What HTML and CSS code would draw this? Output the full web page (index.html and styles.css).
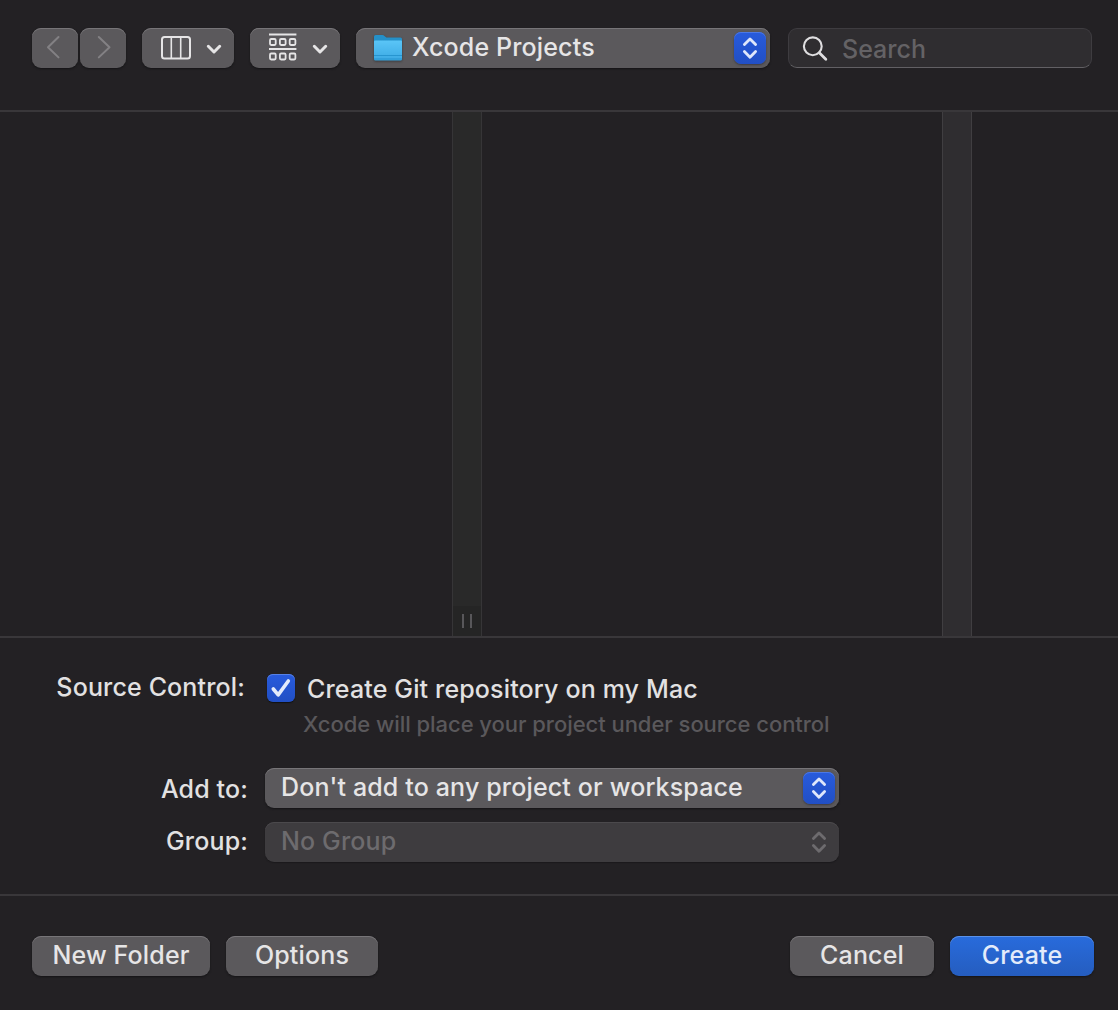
FILE: index.html
```html
<!DOCTYPE html>
<html lang="en">
<head>
<meta charset="utf-8">
<title>Xcode Projects</title>
<link rel="stylesheet" href="styles.css">
</head>
<body>
<svg class="defs" width="0" height="0" aria-hidden="true">
  <symbol id="updown" viewBox="0 0 32 32"><path d="M10.4 12.6 16 6.9l5.6 5.7M10.4 19.6 16 25.3l5.6-5.7" fill="none" stroke="currentColor" stroke-width="2.8" stroke-linecap="round" stroke-linejoin="round"/></symbol>
  <symbol id="down" viewBox="0 0 16 12"><path d="M2.3 3.3 8 9l5.7-5.7" fill="none" stroke="currentColor" stroke-width="3" stroke-linecap="round" stroke-linejoin="round"/></symbol>
</svg>
<main class="dialog">
  <header class="toolbar">
    <div class="nav">
      <button class="control nav-button" aria-label="Back"><svg width="46" height="40" viewBox="0 0 46 40"><path d="M26.5 9 16 19.2l10.5 10.200" fill="none" stroke="currentColor" stroke-width="2" stroke-linecap="round" stroke-linejoin="round"/></svg></button>
      <button class="control nav-button" aria-label="Forward"><svg width="46" height="40" viewBox="0 0 46 40"><path d="M18.8 9l10.7 10.200-10.700 10.200" fill="none" stroke="currentColor" stroke-width="2" stroke-linecap="round" stroke-linejoin="round"/></svg></button>
    </div>
    <button class="control view-button" aria-label="Columns">
      <svg width="30" height="24" viewBox="0 0 30 24"><path d="M10.3 1v22M19.7 1v22" stroke="currentColor" stroke-width="1.6"/><rect x="1" y="1" width="28" height="21.5" rx="2.5" fill="none" stroke="currentColor" stroke-width="2"/></svg>
      <svg class="caret" width="16" height="12"><use href="#down"/></svg>
    </button>
    <button class="control group-button" aria-label="Group by">
      <svg width="28" height="28" viewBox="0 0 28 28"><path d="M0 1.5h27.400M0 16h27.400" stroke="currentColor" stroke-width="2"/><g fill="none" stroke="currentColor" stroke-width="1.8"><rect x="1" y="6" width="5.700" height="6" rx="1.2"/><rect x="10.900" y="6" width="5.700" height="6" rx="1.2"/><rect x="20.700" y="6" width="5.700" height="6" rx="1.2"/><rect x="1" y="20.5" width="5.700" height="6" rx="1.2"/><rect x="10.900" y="20.5" width="5.700" height="6" rx="1.2"/><rect x="20.700" y="20.5" width="5.700" height="6" rx="1.2"/></g></svg>
      <svg class="caret" width="16" height="12"><use href="#down"/></svg>
    </button>
    <button class="control popup location">
      <svg class="folder" width="30" height="30" viewBox="0 0 30 30"><defs><linearGradient id="face" x1="0" y1="0" x2="0" y2="1"><stop offset="0" stop-color="#5ac5f7"/><stop offset="1" stop-color="#3ba9e3"/></linearGradient></defs><path d="M1 3.5Q1 2 2.5 2h7q1 0 2 .9L13.4 4.4H27.5Q29 4.4 29 6v20H1z" fill="#2590c8"/><path d="M1 8.3Q1 7.6 2 7.6h26q1 0 1 .7V26q0 1.6-1.6 1.6H2.6Q1 27.600 1 26z" fill="url(#face)"/><path d="M1 22.500h28M1 26h28" stroke="#2795d0"/></svg>
      <span class="label">Xcode Projects</span>
      <span class="stepper"><svg width="32" height="32"><use href="#updown"/></svg></span>
    </button>
    <label class="search">
      <svg width="28" height="28" viewBox="0 0 28 28"><circle cx="11.800" cy="12.300" r="8.900" fill="none" stroke="currentColor" stroke-width="2.100"/><path d="m18.300 18.800 6.500 6.400" stroke="currentColor" stroke-width="2.800" stroke-linecap="round"/></svg>
      <span>Search</span>
    </label>
  </header>
  <section class="browser">
    <div class="column"></div>
    <div class="scroller first"><span class="grip"></span></div>
    <div class="column"></div>
    <div class="scroller second"></div>
    <div class="column"></div>
  </section>
  <section class="form">
    <span class="row-label source">Source Control:</span>
    <div class="field git">
      <span class="checkbox"><svg width="28" height="28" viewBox="0 0 28 28"><path d="m6.300 15 4.900 5.900L21.300 7" fill="none" stroke="#e3ebfb" stroke-width="3.600" stroke-linecap="round" stroke-linejoin="round"/></svg></span>
      <span>Create Git repository on my Mac</span>
    </div>
    <p class="hint">Xcode will place your project under source control</p>
    <span class="row-label add">Add to:</span>
    <button class="control popup project"><span class="label">Don't add to any project or workspace</span><span class="stepper"><svg width="32" height="32"><use href="#updown"/></svg></span></button>
    <span class="row-label group">Group:</span>
    <button class="control popup disabled" disabled><span class="label">No Group</span><span class="stepper"><svg width="32" height="32"><use href="#updown"/></svg></span></button>
  </section>
  <footer class="footer">
    <button class="control new-folder">New Folder</button>
    <button class="control options">Options</button>
    <button class="control cancel">Cancel</button>
    <button class="control create">Create</button>
  </footer>
</main>
</body>
</html>
```

FILE: styles.css
```css
* { box-sizing: border-box; }
body { margin: 0; background: #232124; color: #e2e1e2; font: 500 25px/38px Inter, "Liberation Sans", sans-serif; letter-spacing: .15px; white-space: nowrap; }
svg { display: block; flex: none; }
.defs { position: absolute; }
.dialog { width: 1118px; height: 1010px; display: grid; grid-template-rows: 112px 524px 260px 114px; }

.control { display: flex; align-items: center; height: 40px; padding: 0 0 2px; border: 0; border-radius: 9px; background: #5b595c; color: #e6e5e6; font: inherit; letter-spacing: inherit; box-shadow: inset 0 1px #777578, 0 1px 2px #151416; }

.toolbar { display: flex; align-items: flex-start; padding: 28px 26px 0 32px; border-bottom: 2px solid #39373a; }
.nav { display: flex; gap: 2px; margin-right: 16px; }
.nav-button { width: 46px; padding: 0; color: #838184; }
.view-button { width: 92px; margin-right: 16px; padding: 0 12px 1px 19px; justify-content: space-between; }
.group-button { width: 90px; margin-right: 16px; padding: 0 12px 3px 19px; justify-content: space-between; }
.caret { margin-top: 2px; }
.group-button .caret { margin-top: 4px; }
.popup { padding-left: 16px; padding-right: 4px; }
.popup .label { flex: 1; text-align: left; }
.location { width: 414px; margin-right: 18px; padding-left: 17px; }
.folder { margin: 2px 9px 0 0; filter: drop-shadow(0 1px 1px #3a393b); }
.stepper { width: 32px; height: 32px; margin-top: 2px; border-radius: 7px; color: #dfe7fb; background: linear-gradient(#285bdc, #214fc4); box-shadow: inset 0 1px #4b78e5, 0 1px 2px #3d3b40; }
.search { display: flex; align-items: center; width: 304px; height: 40px; padding-left: 12px; border: 1px solid #3e3c40; border-bottom-color: #626064; border-radius: 9px; background: #2f2d30; color: #dfdee0; }
.search span { margin: 2px 0 0 13px; color: #646265; letter-spacing: 0; }

.browser { display: grid; grid-template-columns: 452px 30px 460px 30px 1fr; }
.scroller { border: solid #363537; border-width: 0 1px; background: #2f2d30; }
.scroller.first { display: flex; align-items: flex-end; background: linear-gradient(#292929 494px, #252525 494px); }
.scroller.second { border-color: #403e41; }
.grip { width: 10px; height: 14px; margin: 0 0 8px 9px; border: solid #58575a; border-width: 0 2px; }

.form { display: grid; grid-template-columns: 248px 574px; grid-template-rows: 38px 40px 40px 40px; column-gap: 17px; align-content: start; padding-top: 32px; border-top: 2px solid #39373a; border-bottom: 2px solid #39373a; }
.row-label { text-align: right; }
.source { padding-right: 3px; margin-top: -2px; }
.git { display: flex; align-items: flex-start; }
.checkbox { width: 28px; height: 28px; margin: 4px 12px 0 2px; border-radius: 6px; background: linear-gradient(#285bdc, #214fc4); box-shadow: inset 0 1px #5781e4, 0 1px 1px #111; }
.hint { grid-column: 2; margin: 0 0 0 38px; font-size: 22px; line-height: 32px; letter-spacing: -.04px; color: #5a585b; }
.add { margin-top: 22px; }
.project { width: 574px; margin-top: 20px; }
.group { margin-top: 34px; }
.disabled { width: 574px; margin-top: 34px; background: #3e3c3f; color: #6d6b6e; box-shadow: inset 0 1px #4b494c, 0 1px 1px #1b191c; }
.disabled .stepper { background: none; box-shadow: none; color: #6d6b6e; }

.footer { display: flex; gap: 16px; padding: 40px 24px 0 32px; }
.footer .control { justify-content: center; }
.new-folder { width: 178px; }
.options { width: 152px; }
.cancel { width: 144px; margin-left: auto; }
.footer .create { width: 144px; color: #e3ebfa; background: linear-gradient(#286bdc, #255dbf); box-shadow: inset 0 1px #5a91e8, 0 1px 2px #151416; }
```
